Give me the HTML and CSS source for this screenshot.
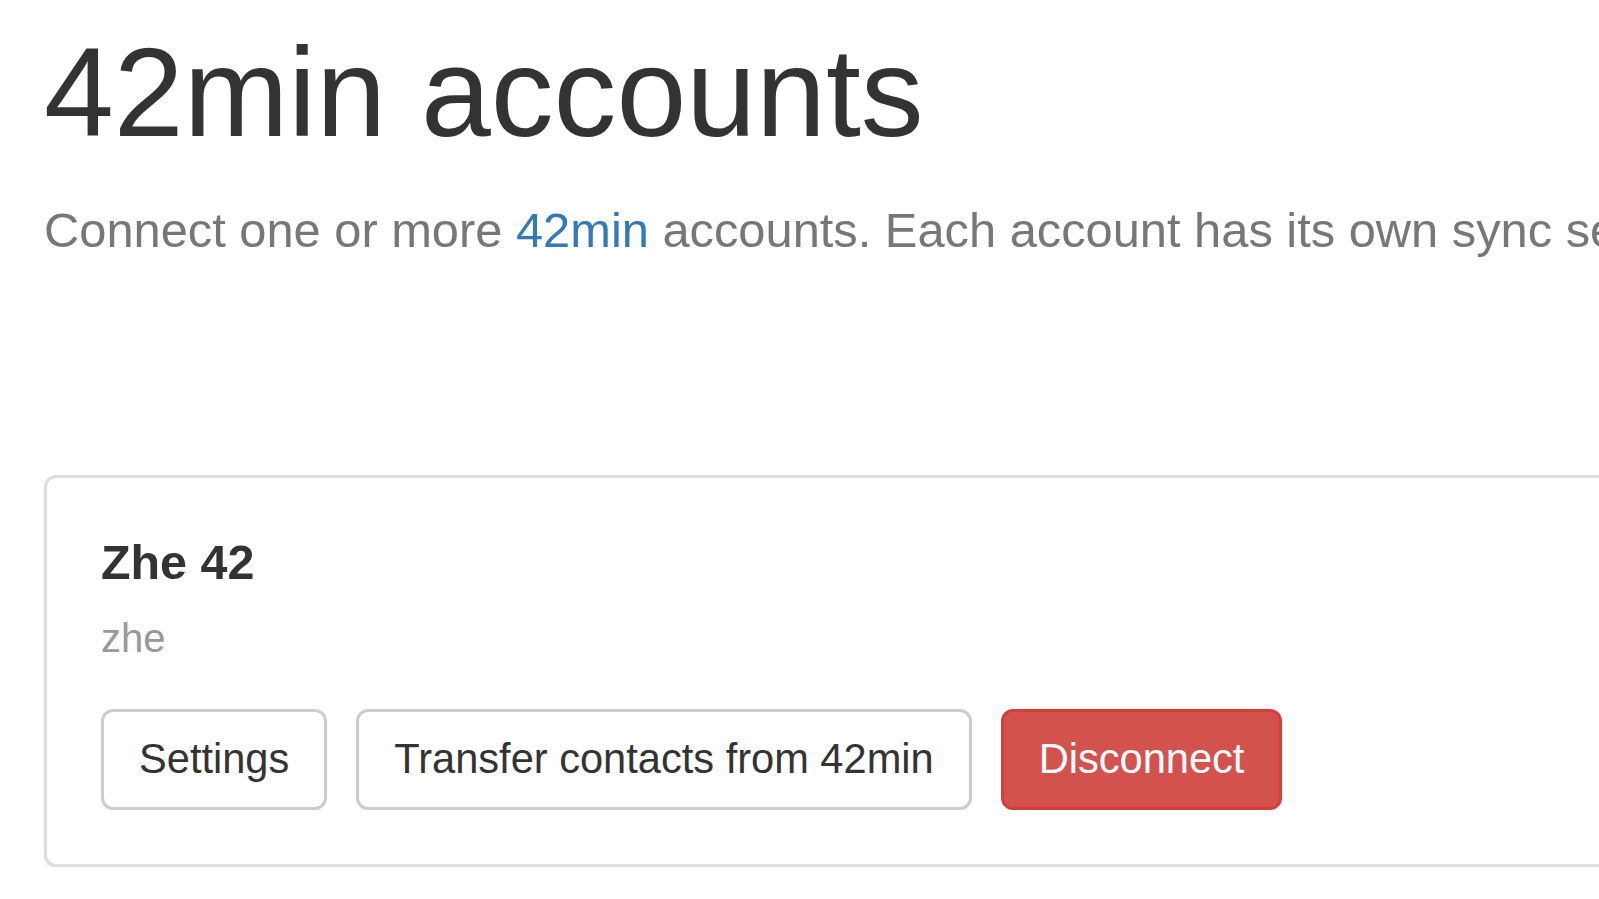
FILE: index.html
```html
<!DOCTYPE html>
<html lang="en">
<head>
<meta charset="utf-8">
<title>42min accounts</title>
<link rel="stylesheet" href="styles.css">
</head>
<body>
<div class="container">
  <h1 class="page-title">42min accounts</h1>
  <p class="lead">Connect one or more <a href="#" class="link">42min</a> accounts. Each account has its own sync settings.</p>
  <div class="panel">
    <h4 class="account-name">Zhe 42</h4>
    <p class="account-user">zhe</p>
    <div class="actions">
      <button class="btn btn-default">Settings</button>
      <button class="btn btn-default">Transfer contacts from 42min</button>
      <button class="btn btn-danger">Disconnect</button>
    </div>
  </div>
</div>
</body>
</html>
```

FILE: styles.css
```css
html, body {
  margin: 0;
  padding: 0;
  overflow: hidden;
  background: #fff;
}

body {
  font-family: "Liberation Sans", Arial, Helvetica, sans-serif;
  color: #333;
}

.container {
  width: 3463px;
  padding-left: 44px;
  box-sizing: border-box;
}

.page-title {
  margin: 25px 0 0;
  font-size: 125.6px;
  line-height: 136px;
  font-weight: 400;
  color: #333;
}

.lead {
  margin: 36px 0 0;
  font-size: 48.8px;
  line-height: 67.7px;
  color: #777;
  white-space: nowrap;
}

.link {
  color: #337ab7;
  text-decoration: none;
}

.panel {
  margin-top: 210px;
  border: 3px solid #dddddd;
  border-radius: 12px;
  box-shadow: 0 3px 3px rgba(0, 0, 0, 0.05);
  padding: 58px 54px 54px;
  background: #fff;
}

.account-name {
  margin: 0;
  font-size: 48.4px;
  line-height: 52.8px;
  font-weight: 700;
  color: #333;
}

.account-user {
  margin: 21px 0 0;
  font-size: 40px;
  line-height: 57px;
  color: #999;
}

.actions {
  margin-top: 42px;
  display: flex;
  gap: 29px;
}

.btn {
  font-family: "Liberation Sans", Arial, Helvetica, sans-serif;
  font-size: 41.6px;
  line-height: 59.3px;
  padding: 17px 35px 19.5px;
  border: 3px solid #ccc;
  border-radius: 12px;
  background: #fff;
  color: #333;
  cursor: pointer;
}

.btn-danger {
  background: #d4524e;
  border-color: #d43f3a;
  color: #fff;
}
```
